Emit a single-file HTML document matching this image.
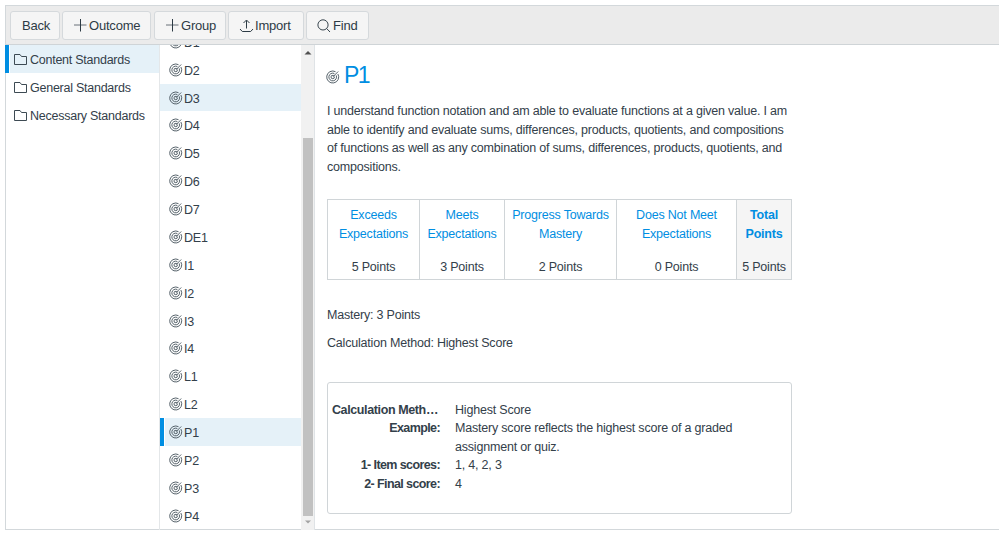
<!DOCTYPE html>
<html><head><meta charset="utf-8">
<style>
*{box-sizing:border-box}
html,body{margin:0;padding:0;background:#fff;width:999px;height:538px;overflow:hidden}
body{font-family:"Liberation Sans",sans-serif;color:#33404a;position:relative}
.abs{position:absolute}
#frame{position:absolute;left:5px;top:5px;width:1000px;height:525px;border:1px solid #d3d8db;border-right:none}
#toolbar{position:absolute;left:6px;top:6px;width:993px;height:39px;background:#ebebeb;border-bottom:1px solid #cfd4d7}
.btn{position:absolute;top:11px;height:29px;background:#f5f5f5;border:1px solid #d5d9dc;border-radius:3px;font-size:13px;line-height:27px;color:#2d3b45;white-space:nowrap;letter-spacing:-0.2px}
.btn svg{position:absolute}
.lrow{position:absolute;left:6px;width:153px;height:28px;font-size:12.5px;line-height:28px;white-space:nowrap;letter-spacing:-0.25px}
.lrow.sel{background:linear-gradient(to right,#fff 0 4px,#e5f1f8 4px)}
.lrow.sel:before{content:"";position:absolute;left:-1px;top:0;width:4px;height:28px;background:#008ee2}
.lrow svg{position:absolute;left:8px;top:9px}
.lrow span{position:absolute;left:24px;top:1px}
#midborder{position:absolute;left:159px;top:45px;width:1px;height:485px;background:#e4e7e9}
#midclip{position:absolute;left:160px;top:45px;width:141px;height:485px;overflow:hidden}
.mrow{position:absolute;left:0;width:141px;height:27.87px;font-size:12.5px;white-space:nowrap;letter-spacing:-0.2px}
.mrow.hl{background:#e5f1f8}
.mrow.sel{background:linear-gradient(to right,#fff 0 5px,#e5f1f8 5px)}
.mrow.sel:before{content:"";position:absolute;left:0;top:0;width:4px;height:100%;background:#008ee2}
.mrow svg{position:absolute;left:9px;top:7px}
.mrow span{position:absolute;left:24px;top:7px;line-height:16px}
#sbtrack{position:absolute;left:301px;top:45px;width:13px;height:485px;background:#f1f1f1}
#sbborder{position:absolute;left:314px;top:45px;width:1px;height:485px;background:#dfe3e6}
#thumb{position:absolute;left:303px;top:138px;width:10px;height:378px;background:#c1c1c1}
#content{position:absolute;left:315px;top:45px;width:684px;height:485px}
p.desc{position:absolute;left:327px;top:102px;width:470px;margin:0;font-size:12.5px;line-height:18.5px;letter-spacing:-0.2px}
h2{position:absolute;left:344px;top:61px;margin:0;font-weight:normal;font-size:23px;line-height:28px;color:#008ee2;letter-spacing:-1.5px}
table.rat{position:absolute;left:327px;top:199px;border-collapse:collapse;font-size:12.5px;letter-spacing:-0.2px}
table.rat td{border:1px solid #d0d5d8;text-align:center;vertical-align:top;padding:0;height:80px;position:relative}
table.rat .h{position:absolute;left:0;right:0;top:6px;line-height:18.5px;color:#008ee2}
table.rat .pts{position:absolute;left:0;right:0;top:59px;line-height:16px}
table.rat td.tot{background:#f5f5f5}
table.rat td.tot .h{font-weight:bold}
.line{position:absolute;font-size:12.5px;white-space:nowrap;letter-spacing:-0.2px;line-height:16px}
#box{position:absolute;left:327px;top:382px;width:465px;height:132px;border:1px solid #d0d5d8;border-radius:3px}
.lbl{position:absolute;font-weight:bold;font-size:12.5px;line-height:16px;white-space:nowrap;text-align:right;letter-spacing:-0.6px}
</style></head><body>
<div id="frame"></div>
<div id="toolbar"></div>

<!-- toolbar buttons -->
<div class="btn" style="left:10px;width:50px;"><span style="position:absolute;left:11px">Back</span></div>
<div class="btn" style="left:62px;width:89px;">
  <svg width="13" height="14" style="left:11px;top:7px" viewBox="0 0 13 14"><path d="M0 6H12.5" stroke="#2d3b45" stroke-opacity="0.7" stroke-width="1" fill="none"/><path d="M6.5 0V12.5" stroke="#2d3b45" stroke-width="1" fill="none"/></svg>
  <span style="position:absolute;left:26px">Outcome</span></div>
<div class="btn" style="left:154px;width:72px;">
  <svg width="13" height="14" style="left:11px;top:7px" viewBox="0 0 13 14"><path d="M0 6H12.5" stroke="#2d3b45" stroke-opacity="0.7" stroke-width="1" fill="none"/><path d="M6.5 0V12.5" stroke="#2d3b45" stroke-width="1" fill="none"/></svg>
  <span style="position:absolute;left:26px">Group</span></div>
<div class="btn" style="left:228px;width:76px;">
  <svg width="15" height="14" style="left:10px;top:7px" viewBox="0 0 15 14"><path d="M7.5 1.5V9.5M4.5 4L7.5 1L10.5 4M1 10L3.3 12.5H11.7L14 10" stroke="#2d3b45" stroke-width="1" fill="none"/></svg>
  <span style="position:absolute;left:26px">Import</span></div>
<div class="btn" style="left:306px;width:63px;">
  <svg width="14" height="14" style="left:10px;top:7px" viewBox="0 0 14 14"><circle cx="6" cy="5.9" r="5.1" stroke="#2d3b45" stroke-width="0.95" fill="none"/><path d="M9.6 9.5L13 13" stroke="#2d3b45" stroke-width="0.95"/></svg>
  <span style="position:absolute;left:26px">Find</span></div>

<!-- left column -->
<div class="lrow sel" style="top:45px"><svg width="14" height="12" viewBox="0 0 14 12"><path d="M0.5 10.5V0.5H6L7.5 2.5H12.5V10.5Z" stroke="#3d4a53" stroke-width="1" fill="none" stroke-linejoin="round"/></svg><span>Content Standards</span></div>
<div class="lrow" style="top:73px"><svg width="14" height="12" viewBox="0 0 14 12"><path d="M0.5 10.5V0.5H6L7.5 2.5H12.5V10.5Z" stroke="#3d4a53" stroke-width="1" fill="none" stroke-linejoin="round"/></svg><span>General Standards</span></div>
<div class="lrow" style="top:101px"><svg width="14" height="12" viewBox="0 0 14 12"><path d="M0.5 10.5V0.5H6L7.5 2.5H12.5V10.5Z" stroke="#3d4a53" stroke-width="1" fill="none" stroke-linejoin="round"/></svg><span>Necessary Standards</span></div>

<div id="midborder"></div>
<div id="midclip">
<div class="mrow" style="top:-17.18px"><svg width="14" height="14" viewBox="0.3 0 14 14"><g fill="none" stroke="#45525b" stroke-width="0.9"><path d="M12.2 4A6 6 0 1 1 9.82 1.7"/><path d="M10.49 5.37A3.85 3.85 0 1 1 8.63 3.51"/><path d="M8.67 6.7A1.7 1.7 0 1 1 7.3 5.33"/><path d="M8 6L12.5 1.5"/></g><path d="M7 7L9.19 6.08L7.92 4.81Z" fill="#45525b"/></svg><span>D1</span></div>
<div class="mrow" style="top:10.69px"><svg width="14" height="14" viewBox="0.3 0 14 14"><g fill="none" stroke="#45525b" stroke-width="0.9"><path d="M12.2 4A6 6 0 1 1 9.82 1.7"/><path d="M10.49 5.37A3.85 3.85 0 1 1 8.63 3.51"/><path d="M8.67 6.7A1.7 1.7 0 1 1 7.3 5.33"/><path d="M8 6L12.5 1.5"/></g><path d="M7 7L9.19 6.08L7.92 4.81Z" fill="#45525b"/></svg><span>D2</span></div>
<div class="mrow hl" style="top:38.56px"><svg width="14" height="14" viewBox="0.3 0 14 14"><g fill="none" stroke="#45525b" stroke-width="0.9"><path d="M12.2 4A6 6 0 1 1 9.82 1.7"/><path d="M10.49 5.37A3.85 3.85 0 1 1 8.63 3.51"/><path d="M8.67 6.7A1.7 1.7 0 1 1 7.3 5.33"/><path d="M8 6L12.5 1.5"/></g><path d="M7 7L9.19 6.08L7.92 4.81Z" fill="#45525b"/></svg><span>D3</span></div>
<div class="mrow" style="top:66.43px"><svg width="14" height="14" viewBox="0.3 0 14 14"><g fill="none" stroke="#45525b" stroke-width="0.9"><path d="M12.2 4A6 6 0 1 1 9.82 1.7"/><path d="M10.49 5.37A3.85 3.85 0 1 1 8.63 3.51"/><path d="M8.67 6.7A1.7 1.7 0 1 1 7.3 5.33"/><path d="M8 6L12.5 1.5"/></g><path d="M7 7L9.19 6.08L7.92 4.81Z" fill="#45525b"/></svg><span>D4</span></div>
<div class="mrow" style="top:94.30px"><svg width="14" height="14" viewBox="0.3 0 14 14"><g fill="none" stroke="#45525b" stroke-width="0.9"><path d="M12.2 4A6 6 0 1 1 9.82 1.7"/><path d="M10.49 5.37A3.85 3.85 0 1 1 8.63 3.51"/><path d="M8.67 6.7A1.7 1.7 0 1 1 7.3 5.33"/><path d="M8 6L12.5 1.5"/></g><path d="M7 7L9.19 6.08L7.92 4.81Z" fill="#45525b"/></svg><span>D5</span></div>
<div class="mrow" style="top:122.17px"><svg width="14" height="14" viewBox="0.3 0 14 14"><g fill="none" stroke="#45525b" stroke-width="0.9"><path d="M12.2 4A6 6 0 1 1 9.82 1.7"/><path d="M10.49 5.37A3.85 3.85 0 1 1 8.63 3.51"/><path d="M8.67 6.7A1.7 1.7 0 1 1 7.3 5.33"/><path d="M8 6L12.5 1.5"/></g><path d="M7 7L9.19 6.08L7.92 4.81Z" fill="#45525b"/></svg><span>D6</span></div>
<div class="mrow" style="top:150.04px"><svg width="14" height="14" viewBox="0.3 0 14 14"><g fill="none" stroke="#45525b" stroke-width="0.9"><path d="M12.2 4A6 6 0 1 1 9.82 1.7"/><path d="M10.49 5.37A3.85 3.85 0 1 1 8.63 3.51"/><path d="M8.67 6.7A1.7 1.7 0 1 1 7.3 5.33"/><path d="M8 6L12.5 1.5"/></g><path d="M7 7L9.19 6.08L7.92 4.81Z" fill="#45525b"/></svg><span>D7</span></div>
<div class="mrow" style="top:177.91px"><svg width="14" height="14" viewBox="0.3 0 14 14"><g fill="none" stroke="#45525b" stroke-width="0.9"><path d="M12.2 4A6 6 0 1 1 9.82 1.7"/><path d="M10.49 5.37A3.85 3.85 0 1 1 8.63 3.51"/><path d="M8.67 6.7A1.7 1.7 0 1 1 7.3 5.33"/><path d="M8 6L12.5 1.5"/></g><path d="M7 7L9.19 6.08L7.92 4.81Z" fill="#45525b"/></svg><span>DE1</span></div>
<div class="mrow" style="top:205.78px"><svg width="14" height="14" viewBox="0.3 0 14 14"><g fill="none" stroke="#45525b" stroke-width="0.9"><path d="M12.2 4A6 6 0 1 1 9.82 1.7"/><path d="M10.49 5.37A3.85 3.85 0 1 1 8.63 3.51"/><path d="M8.67 6.7A1.7 1.7 0 1 1 7.3 5.33"/><path d="M8 6L12.5 1.5"/></g><path d="M7 7L9.19 6.08L7.92 4.81Z" fill="#45525b"/></svg><span>I1</span></div>
<div class="mrow" style="top:233.65px"><svg width="14" height="14" viewBox="0.3 0 14 14"><g fill="none" stroke="#45525b" stroke-width="0.9"><path d="M12.2 4A6 6 0 1 1 9.82 1.7"/><path d="M10.49 5.37A3.85 3.85 0 1 1 8.63 3.51"/><path d="M8.67 6.7A1.7 1.7 0 1 1 7.3 5.33"/><path d="M8 6L12.5 1.5"/></g><path d="M7 7L9.19 6.08L7.92 4.81Z" fill="#45525b"/></svg><span>I2</span></div>
<div class="mrow" style="top:261.52px"><svg width="14" height="14" viewBox="0.3 0 14 14"><g fill="none" stroke="#45525b" stroke-width="0.9"><path d="M12.2 4A6 6 0 1 1 9.82 1.7"/><path d="M10.49 5.37A3.85 3.85 0 1 1 8.63 3.51"/><path d="M8.67 6.7A1.7 1.7 0 1 1 7.3 5.33"/><path d="M8 6L12.5 1.5"/></g><path d="M7 7L9.19 6.08L7.92 4.81Z" fill="#45525b"/></svg><span>I3</span></div>
<div class="mrow" style="top:289.39px"><svg width="14" height="14" viewBox="0.3 0 14 14"><g fill="none" stroke="#45525b" stroke-width="0.9"><path d="M12.2 4A6 6 0 1 1 9.82 1.7"/><path d="M10.49 5.37A3.85 3.85 0 1 1 8.63 3.51"/><path d="M8.67 6.7A1.7 1.7 0 1 1 7.3 5.33"/><path d="M8 6L12.5 1.5"/></g><path d="M7 7L9.19 6.08L7.92 4.81Z" fill="#45525b"/></svg><span>I4</span></div>
<div class="mrow" style="top:317.26px"><svg width="14" height="14" viewBox="0.3 0 14 14"><g fill="none" stroke="#45525b" stroke-width="0.9"><path d="M12.2 4A6 6 0 1 1 9.82 1.7"/><path d="M10.49 5.37A3.85 3.85 0 1 1 8.63 3.51"/><path d="M8.67 6.7A1.7 1.7 0 1 1 7.3 5.33"/><path d="M8 6L12.5 1.5"/></g><path d="M7 7L9.19 6.08L7.92 4.81Z" fill="#45525b"/></svg><span>L1</span></div>
<div class="mrow" style="top:345.13px"><svg width="14" height="14" viewBox="0.3 0 14 14"><g fill="none" stroke="#45525b" stroke-width="0.9"><path d="M12.2 4A6 6 0 1 1 9.82 1.7"/><path d="M10.49 5.37A3.85 3.85 0 1 1 8.63 3.51"/><path d="M8.67 6.7A1.7 1.7 0 1 1 7.3 5.33"/><path d="M8 6L12.5 1.5"/></g><path d="M7 7L9.19 6.08L7.92 4.81Z" fill="#45525b"/></svg><span>L2</span></div>
<div class="mrow sel" style="top:373.00px"><svg width="14" height="14" viewBox="0.3 0 14 14"><g fill="none" stroke="#45525b" stroke-width="0.9"><path d="M12.2 4A6 6 0 1 1 9.82 1.7"/><path d="M10.49 5.37A3.85 3.85 0 1 1 8.63 3.51"/><path d="M8.67 6.7A1.7 1.7 0 1 1 7.3 5.33"/><path d="M8 6L12.5 1.5"/></g><path d="M7 7L9.19 6.08L7.92 4.81Z" fill="#45525b"/></svg><span>P1</span></div>
<div class="mrow" style="top:400.87px"><svg width="14" height="14" viewBox="0.3 0 14 14"><g fill="none" stroke="#45525b" stroke-width="0.9"><path d="M12.2 4A6 6 0 1 1 9.82 1.7"/><path d="M10.49 5.37A3.85 3.85 0 1 1 8.63 3.51"/><path d="M8.67 6.7A1.7 1.7 0 1 1 7.3 5.33"/><path d="M8 6L12.5 1.5"/></g><path d="M7 7L9.19 6.08L7.92 4.81Z" fill="#45525b"/></svg><span>P2</span></div>
<div class="mrow" style="top:428.74px"><svg width="14" height="14" viewBox="0.3 0 14 14"><g fill="none" stroke="#45525b" stroke-width="0.9"><path d="M12.2 4A6 6 0 1 1 9.82 1.7"/><path d="M10.49 5.37A3.85 3.85 0 1 1 8.63 3.51"/><path d="M8.67 6.7A1.7 1.7 0 1 1 7.3 5.33"/><path d="M8 6L12.5 1.5"/></g><path d="M7 7L9.19 6.08L7.92 4.81Z" fill="#45525b"/></svg><span>P3</span></div>
<div class="mrow" style="top:456.61px"><svg width="14" height="14" viewBox="0.3 0 14 14"><g fill="none" stroke="#45525b" stroke-width="0.9"><path d="M12.2 4A6 6 0 1 1 9.82 1.7"/><path d="M10.49 5.37A3.85 3.85 0 1 1 8.63 3.51"/><path d="M8.67 6.7A1.7 1.7 0 1 1 7.3 5.33"/><path d="M8 6L12.5 1.5"/></g><path d="M7 7L9.19 6.08L7.92 4.81Z" fill="#45525b"/></svg><span>P4</span></div>
</div>

<div id="sbtrack"></div>
<div id="thumb"></div>
<div id="sbborder"></div>
<svg class="abs" style="left:302px;top:49px" width="12" height="8" viewBox="0 0 12 8"><path d="M2.5 5.5H9.5L6 2Z" fill="#505050"/></svg>
<svg class="abs" style="left:302px;top:518px" width="12" height="8" viewBox="0 0 12 8"><path d="M3 2.5H9L6 5.5Z" fill="#a3a3a3"/></svg>

<!-- content -->
<div class="abs" style="left:326px;top:70px"><svg width="14" height="14" viewBox="0.3 0 14 14"><g fill="none" stroke="#45525b" stroke-width="0.9"><path d="M12.2 4A6 6 0 1 1 9.82 1.7"/><path d="M10.49 5.37A3.85 3.85 0 1 1 8.63 3.51"/><path d="M8.67 6.7A1.7 1.7 0 1 1 7.3 5.33"/><path d="M8 6L12.5 1.5"/></g><path d="M7 7L9.19 6.08L7.92 4.81Z" fill="#45525b"/></svg></div>
<h2>P1</h2>
<p class="desc">I understand function notation and am able to evaluate functions at a given value. I am<br>able to identify and evaluate sums, differences, products, quotients, and compositions<br>of functions as well as any combination of sums, differences, products, quotients, and<br>compositions.</p>

<table class="rat">
<tr>
<td style="width:92px"><div class="h">Exceeds<br>Expectations</div><div class="pts">5 Points</div></td>
<td style="width:85px"><div class="h">Meets<br>Expectations</div><div class="pts">3 Points</div></td>
<td style="width:112px"><div class="h">Progress Towards<br>Mastery</div><div class="pts">2 Points</div></td>
<td style="width:120px"><div class="h">Does Not Meet<br>Expectations</div><div class="pts">0 Points</div></td>
<td class="tot" style="width:55px"><div class="h">Total<br>Points</div><div class="pts">5 Points</div></td>
</tr></table>

<div class="line" style="left:327px;top:307px">Mastery: 3 Points</div>
<div class="line" style="left:327px;top:335px">Calculation Method: Highest Score</div>

<div id="box"></div>
<div class="lbl" style="right:561px;top:402px;letter-spacing:-0.38px">Calculation Meth…</div>
<div class="lbl" style="right:559px;top:420px">Example:</div>
<div class="lbl" style="right:559px;top:457px">1- Item scores:</div>
<div class="lbl" style="right:559px;top:476px">2- Final score:</div>
<div class="line" style="left:455px;top:402px">Highest Score</div>
<div class="line" style="left:455px;top:420px">Mastery score reflects the highest score of a graded</div>
<div class="line" style="left:455px;top:439px">assignment or quiz.</div>
<div class="line" style="left:455px;top:457px">1, 4, 2, 3</div>
<div class="line" style="left:455px;top:476px">4</div>

</body></html>
